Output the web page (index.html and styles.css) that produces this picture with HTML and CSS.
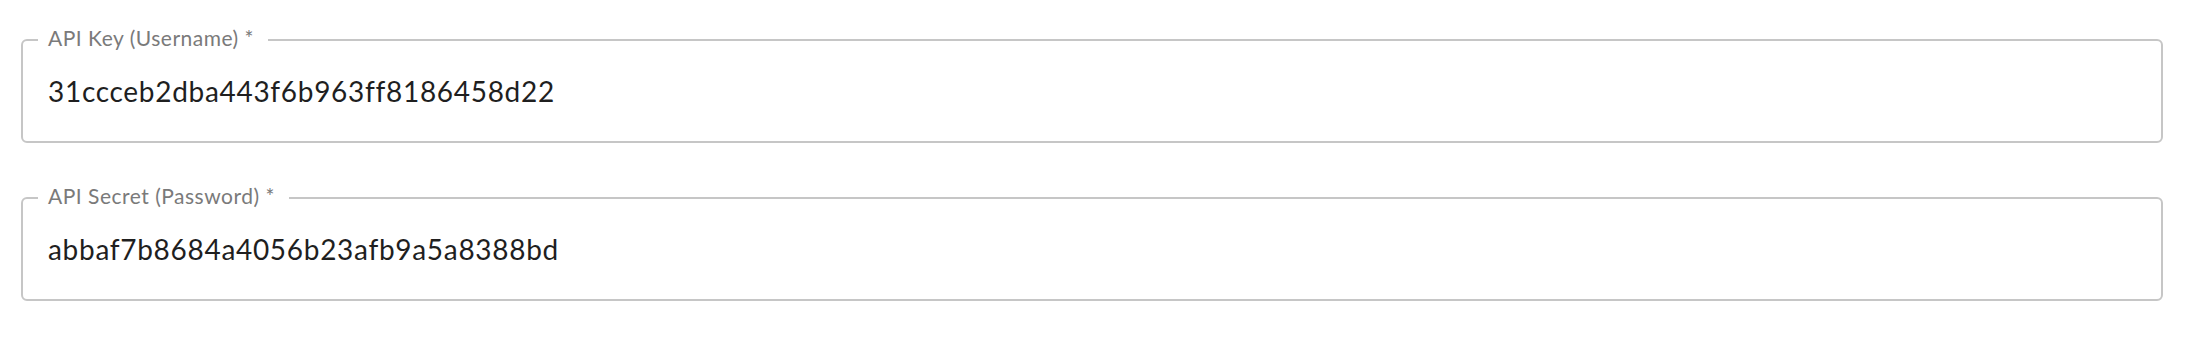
FILE: index.html
```html
<!DOCTYPE html>
<html lang="en">
<head>
    <meta charset="UTF-8">
    <meta name="viewport" content="width=device-width, initial-scale=1.0">
    <title>API Credentials</title>
    <link rel="stylesheet" href="styles.css">
</head>
<body>
    <form class="credentials">
        <fieldset class="field">
            <legend class="field-label">API Key (Username) *</legend>
            <input class="field-input" type="text" value="31ccceb2dba443f6b963ff8186458d22" readonly>
        </fieldset>

        <fieldset class="field">
            <legend class="field-label">API Secret (Password) *</legend>
            <input class="field-input" type="text" value="abbaf7b8684a4056b23afb9a5a8388bd" readonly>
        </fieldset>
    </form>
</body>
</html>
```

FILE: styles.css
```css
body {
    margin: 0;
    background-color: #fff;
    font-family: 'Lato', 'Open Sans', sans-serif;
}
.credentials {
    padding: 27px 41px 0 21px;
}
.field {
    margin: 0 0 42px 0;
    padding: 0 15px;
    border: 2px solid #c6c6c6;
    border-radius: 6px;
    min-width: 0;
}
.field-label {
    padding: 0 14px 4px 10px;
    font-size: 21px;
    line-height: 21px;
    letter-spacing: 0.5px;
    color: #7a7a7a;
}
.field-input {
    display: block;
    width: 100%;
    box-sizing: border-box;
    height: 89px;
    margin: 0;
    padding: 0 10px 12px;
    border: none;
    outline: none;
    background: transparent;
    font-family: 'Lato', 'Open Sans', sans-serif;
    font-size: 28px;
    letter-spacing: 0.7px;
    color: #1f1f1f;
}
```
